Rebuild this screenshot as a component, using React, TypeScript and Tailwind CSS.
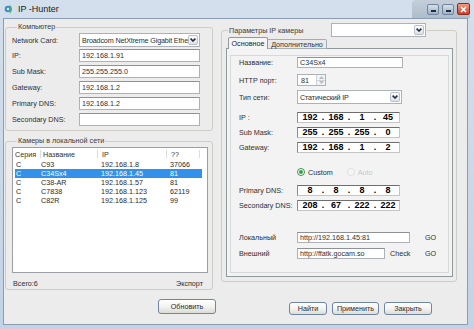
import React from 'react';

const Field = ({ children, className = '' }: { children?: React.ReactNode; className?: string }) => (
  <div
    className={`flex items-center bg-white border border-[#aeb2b7] border-t-[#8d9298] px-[2px] overflow-hidden whitespace-nowrap ${className}`}
  >
    {children}
  </div>
);

const Chevron = () => (
  <svg width="6" height="4" viewBox="0 0 6 4">
    <path d="M0.6 0.6 L3 3 L5.4 0.6" fill="none" stroke="#1d2a3a" strokeWidth="1.5" />
  </svg>
);

const Select = ({ value, className = '' }: { value: string; className?: string }) => (
  <div className={`flex items-stretch bg-white border border-[#aeb2b7] p-[1px] ${className}`}>
    <div className="flex-1 flex items-center px-[1px] overflow-hidden whitespace-nowrap tracking-[-0.15px]">{value}</div>
    <div className="w-[10px] flex items-center justify-center border border-[#b8c0ca] rounded-[2px] bg-gradient-to-b from-[#fdfdfd] to-[#dde1e6]">
      <Chevron />
    </div>
  </div>
);

const IpField = ({ parts }: { parts: string[] }) => (
  <div className="w-[103px] h-[11px] flex items-center pl-[1px] bg-white border border-[#c4c4c4] border-t-[#6e6e6e] border-l-[#8c8c8c] font-['Liberation_Sans',Arial,sans-serif] font-bold text-[9px] leading-[9px] text-black">
    {parts.map((p, i) => (
      <React.Fragment key={i}>
        {i > 0 && <span className="w-[4px] text-center">.</span>}
        <span className="w-[22px] text-center">{p}</span>
      </React.Fragment>
    ))}
  </div>
);

const Button = ({ label, className = '' }: { label: string; className?: string }) => (
  <div
    className={`flex items-center justify-center rounded-[3px] border border-[#6f86a3] bg-gradient-to-b from-[#ffffff] via-[#f3f3f1] to-[#dcdcd6] text-[#2b2b2b] ${className}`}
  >
    {label}
  </div>
);

const cams = [
  ['C', 'C93', '192.168.1.8', '37066'],
  ['C', 'C34Sx4', '192.168.1.45', '81'],
  ['C', 'C38-AR', '192.168.1.57', '81'],
  ['C', 'C7838', '192.168.1.123', '62119'],
  ['C', 'C82R', '192.168.1.125', '99'],
];

const leftRows = [
  ['IP:', '192.168.1.91'],
  ['Sub Mask:', '255.255.255.0'],
  ['Gateway:', '192.168.1.2'],
  ['Primary DNS:', '192.168.1.2'],
  ['Secondary DNS:', ''],
];

const App = () => {
  return (
    <div className="w-[474px] h-[329px] flex flex-col overflow-hidden bg-gradient-to-b from-[#d3dfec] to-[#c2d3e6] font-['Liberation_Sans',Arial,sans-serif] text-[7.2px] leading-[9px] text-[#2e2e2e]">
      {/* title bar */}
      <div className="h-[18px] flex items-center shrink-0">
        <svg className="ml-[4px]" width="10" height="11" viewBox="0 0 10 11">
          <circle cx="4" cy="5" r="3.3" fill="#3f8fc9" />
          <path d="M5 1 C9 2 9 8 5 10 C7 7 7 4 5 1 Z" fill="#54b06b" />
          <circle cx="4" cy="5" r="1.2" fill="#d9eefa" />
        </svg>
        <span className="ml-[4px] text-[9px] text-[#1c1c1c]">IP -Hunter</span>
        <div className="ml-auto mr-[4px] h-[18px] flex items-center gap-[3px] pl-[15px] rounded-tl-[4px] bg-gradient-to-b from-[#c3ced9] to-[#aebdcc]">
          <div className="w-[12px] h-[11px] rounded-[2px] border border-[#70859b] bg-gradient-to-b from-[#d6e0ea] to-[#9fb2c6] flex items-end pl-[3px] pb-[2px]">
            <div className="w-[5px] h-[2px] bg-[#1f2d3d]" />
          </div>
          <div className="w-[12px] h-[11px] rounded-[2px] border border-[#70859b] bg-gradient-to-b from-[#d6e0ea] to-[#9fb2c6] flex items-end pl-[3px] pb-[2px]">
            <div className="w-[5px] h-[2px] bg-[#1f2d3d]" />
          </div>
          <div className="w-[13px] h-[12px] rounded-[2px] border border-[#8c2a1c] bg-gradient-to-b from-[#f19a85] to-[#c8412b] flex items-center justify-center">
            <svg width="7" height="7" viewBox="0 0 7 7">
              <path d="M1 1 L6 6 M6 1 L1 6" stroke="#ffffff" strokeWidth="1.6" />
            </svg>
          </div>
        </div>
      </div>

      {/* window body */}
      <div className="flex-1 ml-[3px] mr-[6px] mb-[4px] flex bg-[#ececec] border border-[#8a9db3]">
        {/* left column */}
        <div className="w-[212px] pl-[1px] pt-[3px] flex flex-col">
          <fieldset className="w-[208px] border border-[#cdcdc6] rounded-[3px] pl-[6px] pt-[1px] pb-[4px]">
            <legend className="ml-[5px] px-[1px] leading-[10px] text-[#3a3a3a]">Компьютер</legend>
            <div className="flex items-center h-[14px]">
              <span className="w-[67px]">Network Card:</span>
              <Select value="Broadcom NetXtreme Gigabit Ethe" className="w-[121px] h-[14px]" />
            </div>
            {leftRows.map(([l, v], i) => (
              <div key={l} className={`flex items-center h-[13px] ${i === 0 ? 'mt-[2px]' : 'mt-[3px]'}`}>
                <span className="w-[67px]">{l}</span>
                <Field className="w-[121px] h-[13px] bg-[#f4f4f4]">{v}</Field>
              </div>
            ))}
          </fieldset>

          <fieldset className="mt-[5px] w-[208px] border border-[#cdcdc6] rounded-[3px] pl-[6px] pr-[4px] pt-[1px] pb-[1px]">
            <legend className="ml-[5px] px-[1px] leading-[10px] text-[#3a3a3a]">Камеры в локальной сети</legend>
            <div className="h-[126px] bg-white border border-[#9aa0a6] flex flex-col">
              <div className="h-[12px] flex items-center text-[#333]">
                <div className="w-[28px] pl-[2px] border-r border-[#dcdcdc] h-[8px] flex items-center">Серия</div>
                <div className="w-[57px] pl-[2px] border-r border-[#dcdcdc] h-[8px] flex items-center">Название</div>
                <div className="w-[69px] pl-[4px] border-r border-[#dcdcdc] h-[8px] flex items-center">IP</div>
                <div className="w-[33px] pl-[4px] border-r border-[#dcdcdc] h-[8px] flex items-center">??</div>
              </div>
              {cams.map((c, i) => (
                <div
                  key={c[1]}
                  className={`h-[9px] w-[187px] ml-[2px] flex items-center ${i === 1 ? 'bg-[#3391ea] text-white' : 'text-[#2a2a2a]'}`}
                >
                  <div className="w-[26px] pl-[1px]">{c[0]}</div>
                  <div className="w-[59px]">{c[1]}</div>
                  <div className="w-[69px] pl-[1px]">{c[2]}</div>
                  <div className="w-[30px] pl-[1px]">{c[3]}</div>
                </div>
              ))}
            </div>
            <div className="mt-[5px] h-[10px] flex items-center justify-between pl-[1px] pr-[5px]">
              <span>Всего:6</span>
              <span>Экспорт</span>
            </div>
          </fieldset>

          <Button label="Обновить" className="self-end mt-[9px] w-[58px] h-[15px]" />
        </div>

        {/* right column */}
        <div className="ml-[5px] pt-[4px] flex flex-col">
          <fieldset className="w-[236px] border border-[#cdcdc6] rounded-[3px] pl-[4px] pr-[3px] pb-[4px]">
            <legend className="ml-[2px] px-[1px]">
              <div className="flex items-center">
                <span className="w-[100px] text-[#3a3a3a]">Параметры IP камеры</span>
                <Select value="" className="ml-[2px] w-[95px] h-[14px]" />
              </div>
            </legend>

            <div className="flex items-end ml-[2px] h-[12px]">
              <div className="relative z-10 h-[12px] w-[40px] flex items-center justify-center bg-[#f5f5f5] border border-b-0 border-[#8f9a9c] rounded-t-[2px] text-[#1e1e1e]">
                Основное
              </div>
              <div className="h-[10px] w-[59px] flex items-center justify-center bg-[#eaeaea] border border-l-0 border-[#a5aeb0] rounded-tr-[2px] text-[#333]">
                Дополнительно
              </div>
            </div>

            <div className="-mt-[1px] h-[229px] border border-[#8f9a9c] bg-[#f3f3f3] px-[3px] pt-[6px] pb-[3px] flex">
              <div className="flex-1 border border-[#d8d8d8] pl-[8px] flex flex-col">
                <div className="mt-[1px] flex items-center h-[11px]">
                  <span className="w-[58px]">Название:</span>
                  <Field className="w-[106px] h-[11px]">C34Sx4</Field>
                </div>
                <div className="mt-[6px] flex items-center h-[12px]">
                  <span className="w-[58px]">HTTP порт:</span>
                  <div className="w-[29px] h-[12px] flex bg-white border border-[#aeb2b7]">
                    <span className="flex-1 flex items-center pl-[3px]">81</span>
                    <div className="w-[9px] flex flex-col border-l border-[#d0d4d8] bg-[#f1f3f5]">
                      <div className="flex-1 flex items-center justify-center border-b border-[#d0d4d8]">
                        <svg width="5" height="3" viewBox="0 0 5 3"><path d="M0 3 L2.5 0 L5 3 Z" fill="#b5bcc4" /></svg>
                      </div>
                      <div className="flex-1 flex items-center justify-center">
                        <svg width="5" height="3" viewBox="0 0 5 3"><path d="M0 0 L2.5 3 L5 0 Z" fill="#b5bcc4" /></svg>
                      </div>
                    </div>
                  </div>
                </div>
                <div className="mt-[4px] flex items-center h-[14px]">
                  <span className="w-[58px]">Тип сети:</span>
                  <Select value="Статический IP" className="w-[105px] h-[14px]" />
                </div>
                <div className="mt-[8px] flex items-center h-[11px]">
                  <span className="w-[58px]">IP :</span>
                  <IpField parts={['192', '168', '1', '45']} />
                </div>
                <div className="mt-[4px] flex items-center h-[11px]">
                  <span className="w-[58px]">Sub Mask:</span>
                  <IpField parts={['255', '255', '255', '0']} />
                </div>
                <div className="mt-[4px] flex items-center h-[11px]">
                  <span className="w-[58px]">Gateway:</span>
                  <IpField parts={['192', '168', '1', '2']} />
                </div>
                <div className="mt-[14px] flex items-center h-[10px] pl-[58px]">
                  <div className="w-[8px] h-[8px] rounded-full border border-[#3f8f47] bg-white flex items-center justify-center">
                    <div className="w-[4px] h-[4px] rounded-full bg-[#34a04a]" />
                  </div>
                  <span className="ml-[3px]">Custom</span>
                  <div className="ml-[14px] w-[8px] h-[8px] rounded-full border border-[#e0e0e0] bg-[#f6f6f6]" />
                  <span className="ml-[3px] text-[#c8c8c8]">Auto</span>
                </div>
                <div className="mt-[8px] flex items-center h-[11px]">
                  <span className="w-[58px]">Primary DNS:</span>
                  <IpField parts={['8', '8', '8', '8']} />
                </div>
                <div className="mt-[4px] flex items-center h-[11px]">
                  <span className="w-[58px]">Secondary DNS:</span>
                  <IpField parts={['208', '67', '222', '222']} />
                </div>
                <div className="mt-[21px] flex items-center h-[11px]">
                  <span className="w-[58px]">Локальный</span>
                  <Field className="w-[113px] h-[11px]">http://192.168.1.45:81</Field>
                  <span className="ml-[15px]">GO</span>
                </div>
                <div className="mt-[5px] flex items-center h-[11px]">
                  <span className="w-[58px]">Внешний</span>
                  <Field className="w-[88px] h-[11px]">http://ffatk.gocam.so</Field>
                  <span className="ml-[5px] w-[35px]">Check</span>
                  <span>GO</span>
                </div>
              </div>
            </div>
          </fieldset>

          <div className="mt-[20px] flex justify-end gap-[5px] pr-[25px]">
            <Button label="Найти" className="w-[38px] h-[13px]" />
            <Button label="Применить" className="w-[47px] h-[13px]" />
            <Button label="Закрыть" className="w-[48px] h-[13px]" />
          </div>
        </div>
      </div>
    </div>
  );
};

export default App;
